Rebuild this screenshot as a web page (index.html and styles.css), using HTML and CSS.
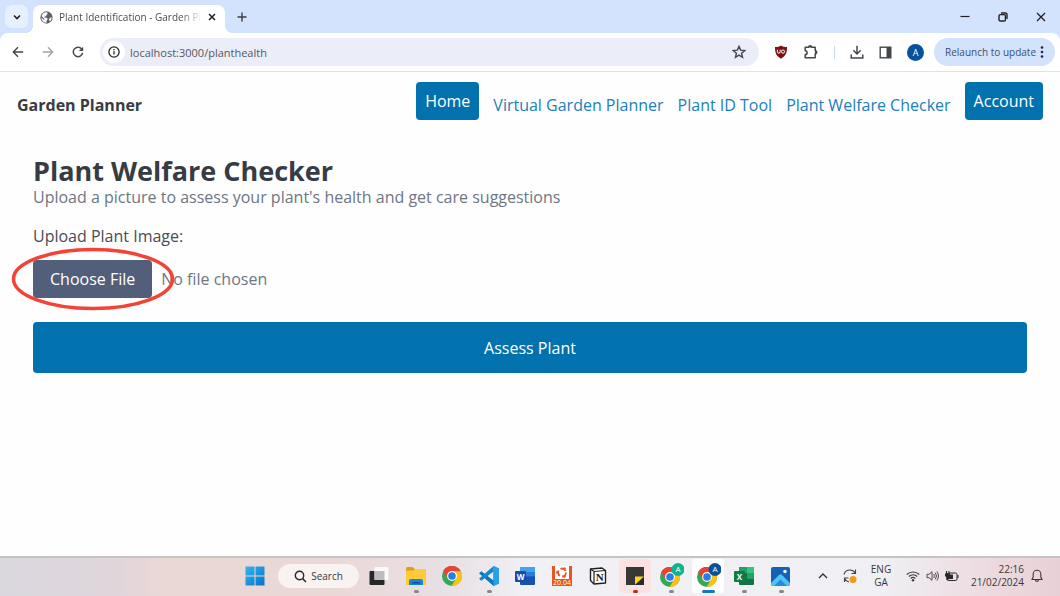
FILE: index.html
```html
<!DOCTYPE html>
<html lang="en">
<head>
<meta charset="utf-8">
<title>Plant Identification - Garden Planner</title>
<link rel="stylesheet" href="styles.css">
</head>
<body>
<header class="browser">
  <div class="tabstrip">
    <button class="tab-search" aria-label="Search tabs"><svg width="10" height="10" viewBox="0 0 10 10"><path d="M2 3.5 5 6.5 8 3.5" fill="none" stroke="#1f2328" stroke-width="1.6"/></svg></button>
    <div class="tab">
      <svg width="13" height="13" viewBox="0 0 14 14"><circle cx="7" cy="7" r="6.6" fill="#5c6065"/><path d="M7.600 1.400 8.200 3.200 6.800 4.200 6.600 5.600 4.800 6 5 7.200H7.200L8.400 8.600 7.200 10 7 12.600A5.600 5.600 0 0 1 1.400 7L4.400 9.800 5 9 3.600 7.400 1.700 5.600A5.600 5.600 0 0 1 7.600 1.400zM10.800 7.200 12.600 6.800A5.600 5.600 0 0 1 10.400 11.400L9.600 9z" fill="#fff"/></svg>
      <span class="tab-title">Plant Identification - Garden Planner</span>
      <button class="plain" aria-label="Close tab"><svg width="8" height="8" viewBox="0 0 8 8"><path d="M1 1l6 6M7 1 1 7" stroke="#202124" stroke-width="1.5"/></svg></button>
    </div>
    <button class="plain new-tab" aria-label="New tab"><svg width="10" height="10" viewBox="0 0 10 10"><path d="M5 .5v9M.5 5h9" stroke="#3c4043" stroke-width="1.4"/></svg></button>
    <div class="window-controls">
      <button class="plain" aria-label="Minimize"><svg width="10" height="10" viewBox="0 0 10 10"><path d="M.5 4.500h9" stroke="#202124" stroke-width="1.2"/></svg></button>
      <button class="plain" aria-label="Restore"><svg width="10" height="10" viewBox="0 0 10 10" fill="none" stroke="#202124" stroke-width="1.4"><rect x="1" y="2.6" width="6.4" height="6.4" rx="1.3"/><path d="M3 1h4.2A1.8 1.8 0 0 1 9 2.8V7"/></svg></button>
      <button class="plain" aria-label="Close"><svg width="10" height="10" viewBox="0 0 10 10"><path d="M1 1l8 8M9 1 1 9" stroke="#202124" stroke-width="1.3"/></svg></button>
    </div>
  </div>
  <div class="toolbar">
    <div class="nav-buttons">
      <button class="plain" aria-label="Back"><svg width="12" height="12" viewBox="0 0 12 12"><path d="M11.2 6H1.5M6 1.3 1.3 6 6 10.7" fill="none" stroke="#43474b" stroke-width="1.4"/></svg></button>
      <button class="plain" aria-label="Forward"><svg width="12" height="12" viewBox="0 0 12 12"><path d="M.8 6h9.7M6 1.3 10.7 6 6 10.7" fill="none" stroke="#a2a4a7" stroke-width="1.4"/></svg></button>
      <button class="plain" aria-label="Reload"><svg width="12" height="12" viewBox="0 0 12 12"><path d="M10.6 6.8A4.7 4.7 0 1 1 9.5 2.8L10.4 4" fill="none" stroke="#43474b" stroke-width="1.5"/><path d="M11.2.8v4.3H6.9z" fill="#43474b"/></svg></button>
    </div>
    <div class="omnibox">
      <button class="site-info" aria-label="Site information"><svg width="12" height="12" viewBox="0 0 12 12"><circle cx="6" cy="6" r="5.1" fill="none" stroke="#202124" stroke-width="1.3"/><path d="M6 5.2v3.4M6 3v1.3" stroke="#202124" stroke-width="1.3"/></svg></button>
      <input class="url" type="text" value="localhost:3000/planthealth" aria-label="Address">
      <button class="plain" aria-label="Bookmark"><svg width="14" height="14" viewBox="0 0 14 14"><path d="M7 1.3 8.6 5.1 12.8 5.5 9.6 8.2 10.5 12.3 7 10.1 3.5 12.3 4.4 8.2 1.2 5.5 5.4 5.1z" fill="none" stroke="#43474b" stroke-width="1.4"/></svg></button>
    </div>
    <div class="extensions">
      <button class="plain" aria-label="Blocker"><svg width="14" height="14" viewBox="0 0 14 14"><path d="M7 .4C8.6 1.7 10.6 2.1 13 2.1 13 8 11.8 11 7 13.7 2.2 11 1 8 1 2.1 3.400 2.100 5.400 1.700 7 .4z" fill="#800f14"/><path d="M3.400 4.700v2.100a1.400 1.400 0 0 0 2.800 0V4.700" fill="none" stroke="#fff" stroke-width="1"/><circle cx="9" cy="6.600" r="1.600" fill="none" stroke="#fff"/></svg></button>
      <button class="plain" aria-label="Extensions"><svg width="16" height="16" viewBox="0 0 16 16"><path d="M2.200 3.300H5.700A1.500 1.500 0 0 1 8.700 3.300H12.200V6.800A1.500 1.500 0 0 1 12.200 9.800V13.800H2.200V10.600A1.900 1.900 0 0 0 2.200 6.800z" fill="none" stroke="#43474b" stroke-width="1.500" stroke-linejoin="round"/><path d="M5.600 3.600a1.600 1.600 0 0 1 3.200 0zM12 6.700a1.600 1.600 0 0 1 0 3.200z" fill="#43474b"/></svg></button>
      <span class="divider"></span>
      <button class="plain" aria-label="Downloads"><svg width="14" height="14" viewBox="0 0 14 14"><path d="M7 .8v8M3.300 5.300 7 9l3.700-3.700M1.200 9.500V13h11.600V9.500" fill="none" stroke="#43474b" stroke-width="1.500"/></svg></button>
      <button class="plain" aria-label="Side panel"><svg width="13" height="13" viewBox="0 0 13 13"><rect x="1.200" y="1.200" width="10.600" height="10.600" fill="none" stroke="#43474b" stroke-width="1.400"/><path d="M7.500 1h4.500v11H7.500z" fill="#43474b"/></svg></button>
      <button class="avatar">A</button>
    </div>
    <button class="relaunch">Relaunch to update<svg width="4" height="14" viewBox="0 0 4 14" fill="#1d2b4a"><circle cx="2" cy="2.500" r="1.300"/><circle cx="2" cy="7" r="1.300"/><circle cx="2" cy="11.500" r="1.300"/></svg></button>
  </div>
</header>

<div class="page">
  <nav class="site-nav">
    <strong class="brand">Garden Planner</strong>
    <div class="links">
      <a class="pill" href="#">Home</a>
      <a class="link" href="#">Virtual Garden Planner</a>
      <a class="link" href="#">Plant ID Tool</a>
      <a class="link" href="#">Plant Welfare Checker</a>
      <a class="pill" href="#">Account</a>
    </div>
  </nav>
  <main class="content">
    <h1>Plant Welfare Checker</h1>
    <p class="subtitle">Upload a picture to assess your plant's health and get care suggestions</p>
    <form>
      <label for="plant-image">Upload Plant Image:</label>
      <div class="file-row">
        <input id="plant-image" class="file" type="file">
        <svg class="highlight" width="164" height="64" viewBox="0 0 164 64"><ellipse cx="82" cy="32" rx="79.500" ry="29.500" fill="none" stroke="#f44336" stroke-width="3.500"/></svg>
      </div>
      <button class="assess" type="button">Assess Plant</button>
    </form>
  </main>
</div>

<footer class="taskbar">
  <button class="plain start" aria-label="Start"><svg width="20" height="20" viewBox="0 0 20 20"><defs><linearGradient id="win" x2="1" y2="1"><stop stop-color="#35b5ec"/><stop offset="1" stop-color="#0870cc"/></linearGradient></defs><path d="M.5.5h9v9h-9zM10.500.5h9v9h-9zM.5 10.500h9v9h-9zM10.500 10.500h9v9h-9z" fill="url(#win)"/></svg></button>
  <button class="search"><svg width="13" height="13" viewBox="0 0 13 13"><circle cx="5.500" cy="5.500" r="4.200" fill="none" stroke="#28282a" stroke-width="1.400"/><path d="M8.600 8.600 12 12" stroke="#28282a" stroke-width="1.500"/></svg>Search</button>
  <div class="apps">
    <button class="app" aria-label="Task view"><svg width="20" height="20" viewBox="0 0 20 20"><rect x=".5" y="5" width="15" height="14" rx="1" fill="#262729"/><rect x="5.500" y="1" width="14" height="13" rx="1" fill="#fafafa"/><path d="M5.500 5h10v9h-10z" fill="#bdbdbd"/></svg></button>
    <button class="app running" aria-label="File Explorer"><svg width="20" height="20" viewBox="0 0 20 20"><path d="M0 2.500Q0 1 1.500 1h5L9 3.500V8H0z" fill="#e29c17"/><path d="M0 6 1 4.500h7L9.500 3H19q1 0 1 1v14q0 1-1 1H1q-1 0-1-1z" fill="#ffc937"/><path d="M3 19v-4q0-2 2-2h10q2 0 2 2v4z" fill="#1683d8"/><path d="M6 16h8v1.500H6z" fill="#07529a"/></svg></button>
    <button class="app" aria-label="Chrome"><svg width="20" height="20" viewBox="0 0 20 20"><g id="chrome"><circle cx="10" cy="10" r="10" fill="#34a853"/><path d="M10 10 1.340 5A10 10 0 0 1 18.660 5L18.660 5.500H10z" fill="#ea4335"/><path d="M10 5.200h8.760A10 10 0 0 1 9.500 20L14.200 12.300z" fill="#fbc116"/><path d="M1.340 5A10 10 0 0 1 10 0v5.200L5.600 12.300z" fill="#ea4335"/><circle cx="10" cy="10" r="4.900" fill="#fff"/><circle cx="10" cy="10" r="3.800" fill="#287de9"/></g></svg></button>
    <button class="app running" aria-label="Visual Studio Code"><svg width="20" height="20" viewBox="0 0 20 20"><path d="M14.500 0 20 2.500v15L14.500 20 0 7.200 2.300 5.200 14.500 14.500z" fill="#0878bd"/><path d="M14.500 0v5.500L2.300 14.800 0 12.800z" fill="#1588cc"/><path d="M14.500 0 20 2.500v15L14.500 20z" fill="#26a0e8"/></svg></button>
    <button class="app" aria-label="Word"><svg width="20" height="20" viewBox="0 0 20 20"><rect x="5" y="1" width="15" height="18" rx="1" fill="#1751ad"/><path d="M5 1h15v5H5z" fill="#41a5ee"/><path d="M5 6h15v4.500H5z" fill="#2b7cd3"/><rect y="5" width="11" height="11" rx="1" fill="#124fa8"/><text x="5.500" y="13.500" class="glyph">W</text></svg></button>
    <button class="app" aria-label="Ubuntu 20.04"><svg width="20" height="20" viewBox="0 0 20 20"><path d="M0 0h20v20H0z" fill="#e95420"/><path d="M3 0h14v13H3z" fill="#fff"/><circle cx="10" cy="6.500" r="4" fill="none" stroke="#e95420" stroke-width="1.800" stroke-dasharray="6 2.370"/><g fill="#e95420"><circle cx="5.200" cy="6.500" r="1.200"/><circle cx="12.500" cy="2.500" r="1.200"/><circle cx="12.500" cy="10.500" r="1.200"/></g><text x="10" y="19" class="version">20.04</text></svg></button>
    <button class="app" aria-label="Notion"><svg width="18" height="18" viewBox="0 0 18 18"><path d="M1.500 2 13 1l3.500 2.500v12.500L5 17 1.500 13.500z" fill="#fff" stroke="#202020" stroke-width="1.400" stroke-linejoin="round"/><path d="M1.500 2 5 4.500 16.500 3.500M5 4.500V17" fill="none" stroke="#202020" stroke-width="1.200"/><text x="10.800" y="14" class="notion-letter">N</text></svg></button>
    <button class="app running alert" aria-label="Sticky Notes"><svg width="18" height="18" viewBox="0 0 18 18"><path d="M0 0h18v9.500L9.500 18H0z" fill="#373737"/><path d="M9 9.500h9L9 18z" fill="#ffd413"/><path d="M18 9.500V18H9z" fill="#292929"/></svg></button>
    <button class="app running" aria-label="Chrome, profile A"><svg width="26" height="26" viewBox="0 0 26 26"><use href="#chrome" x="2" y="4"/><circle cx="20" cy="6.500" r="6.500" fill="#12b38f"/><text x="20" y="9.300" class="profile">A</text></svg></button>
    <button class="app running active" aria-label="Chrome, current"><svg width="26" height="26" viewBox="0 0 26 26"><use href="#chrome" x="2" y="4"/><circle cx="20" cy="6.500" r="6.500" fill="#07529b"/><text x="20" y="9.300" class="profile">A</text></svg></button>
    <button class="app running" aria-label="Excel"><svg width="20" height="20" viewBox="0 0 20 20"><rect x="5" y="1" width="15" height="18" rx="1" fill="#147346"/><path d="M5 1h8v6H5z" fill="#21a366"/><path d="M13 1h7v6h-7z" fill="#33c481"/><path d="M13 7h7v6h-7z" fill="#21a366"/><rect y="5" width="11" height="11" rx="1" fill="#107c41"/><text x="5.500" y="13.500" class="glyph">X</text></svg></button>
    <button class="app running" aria-label="Photos"><svg width="19" height="19" viewBox="0 0 19 19"><rect width="19" height="19" rx="2" fill="#1460b4"/><path d="M0 16 8 8q1.500-1.500 3 0l8 8v1q0 2-2 2H2q-2 0-2-2z" fill="#51c3f2"/><path d="M3 19 9.500 12.500 16 19z" fill="#248bdb"/><circle cx="14" cy="4.500" r="1.800" fill="#e6f5ff"/></svg></button>
  </div>
  <div class="tray">
    <button class="plain" aria-label="Hidden icons"><svg width="10" height="10" viewBox="0 0 10 10"><path d="M1 7 5 3l4 4" fill="none" stroke="#303034" stroke-width="1.300"/></svg></button>
    <button class="plain update" aria-label="Update"><svg width="16" height="16" viewBox="0 0 16 16"><path d="M2 6.500A6 6 0 0 1 13 5M13.500 1.500V5.500H9.500M2.500 14V10H6.500M2.500 10.500A6 6 0 0 0 7 14" fill="none" stroke="#454549" stroke-width="1.100"/><circle cx="11" cy="11.500" r="3.500" fill="#f39c12"/></svg></button>
    <div class="language">ENG<br>GA</div>
    <button class="plain quick" aria-label="Network, volume and battery">
      <svg width="14" height="12" viewBox="0 0 14 12"><g fill="none" stroke="#3a3a3e" stroke-width="1.100"><path d="M.8 4.500a8.800 8.800 0 0 1 12.400 0M2.800 6.500a6 6 0 0 1 8.400 0M4.700 8.500a3.300 3.300 0 0 1 4.600 0"/></g><circle cx="7" cy="10.200" r="1.200" fill="#3a3a3e"/></svg>
      <svg width="13" height="12" viewBox="0 0 13 12"><path d="M1 4.300h2L6 1.700v8.600L3 7.700H1zM7.700 4q1.500 2 0 4M9.300 2.700q2.400 3.300 0 6.600M10.900 1.500q3.200 4.500 0 9" fill="none" stroke="#4a4a4e"/></svg>
      <svg width="14" height="12" viewBox="0 0 14 12"><rect x="2" y="3" width="10" height="7.500" rx="1.500" fill="none" stroke="#28282c"/><path d="M3.500 4.500H8V9H3.500zM12.500 5h1v3h-1zM0 3.500h5V6L3.500 7.500V10h-2V7.500L0 6zM1 1h1v3H1zM3.500 1h1v3h-1z" fill="#28282c"/></svg>
    </button>
    <div class="clock">22:16<br>21/02/2024</div>
    <button class="plain" aria-label="Notifications"><svg width="12" height="14" viewBox="0 0 12 14"><path d="M1 10.500 2.200 8V5a3.800 3.800 0 0 1 7.600 0v3L11 10.500zM4.400 10.800a1.600 1.600 0 0 0 3.200 0" fill="none" stroke="#3a3a3e" stroke-width="1.100"/></svg></button>
  </div>
</footer>
</body>
</html>
```
FILE: styles.css
```css
* { box-sizing: border-box; }

body {
  margin: 0;
  min-height: 100vh;
  display: flex;
  flex-direction: column;
  font-family: "Open Sans", "Noto Sans", sans-serif;
  color: #373c44;
  background: #fefefe;
}

button, input { font: inherit; color: inherit; }
svg { display: block; flex: none; }

.plain {
  display: flex;
  align-items: center;
  padding: 0;
  border: 0;
  background: none;
}

/* Browser window */
.browser { background: #d3e2fd; }

.tabstrip {
  display: flex;
  align-items: center;
  height: 33px;
  padding: 0 14px 0 5px;
}

.tab-search {
  display: grid;
  place-items: center;
  width: 23px;
  height: 23px;
  padding: 0;
  border: 0;
  border-radius: 7px;
  background: #e9f0fd;
}

.tab {
  position: relative;
  align-self: flex-end;
  display: flex;
  align-items: center;
  gap: 6px;
  width: 192px;
  height: 28px;
  margin-left: 5px;
  padding: 0 9px 4px 7px;
  border-radius: 8px 8px 0 0;
  background: #fff;
}

.tab::before, .tab::after {
  content: "";
  position: absolute;
  bottom: 0;
  width: 8px;
  height: 8px;
}
.tab::before { left: -8px; background: radial-gradient(circle at 0 0, transparent 8px, #fff 8px); }
.tab::after { right: -8px; background: radial-gradient(circle at 100% 0, transparent 8px, #fff 8px); }

.tab-title {
  flex: 1;
  overflow: hidden;
  white-space: nowrap;
  font-size: 10px;
  color: #4a4d50;
  mask-image: linear-gradient(to right, #000 85%, transparent);
}

.new-tab { margin-left: 12px; }
.window-controls { display: flex; gap: 28px; margin-left: auto; }

.toolbar {
  display: flex;
  align-items: center;
  height: 39px;
  padding: 0 5px 0 12px;
  border-bottom: 1px solid #e0e1e3;
  border-radius: 8px 8px 0 0;
  background: #fff;
}

.nav-buttons { display: flex; gap: 18px; }

.omnibox {
  flex: 1;
  display: flex;
  align-items: center;
  height: 28px;
  margin-left: 16px;
  padding: 0 13px 0 3px;
  border-radius: 14px;
  background: #ebeef8;
}

.site-info {
  display: grid;
  place-items: center;
  width: 22px;
  height: 22px;
  padding: 0;
  border: 0;
  border-radius: 50%;
  background: #fff;
}

.url {
  flex: 1;
  min-width: 0;
  padding: 0 5px;
  border: 0;
  background: none;
  font-size: 11px;
  color: #55585d;
}

.extensions { display: flex; align-items: center; gap: 15px; margin: 0 10px 0 15px; }
.divider { width: 1px; height: 13px; background: #c4dbf8; }

.avatar {
  width: 17px;
  height: 17px;
  padding: 0;
  border: 0;
  border-radius: 50%;
  background: #07529b;
  color: #fff;
  font-size: 9px;
  line-height: 17px;
}

.relaunch {
  display: flex;
  align-items: center;
  gap: 4px;
  height: 28px;
  padding: 0 11px;
  border: 0;
  border-radius: 14px;
  background: #d3e2fd;
  color: #3f506c;
  font-size: 10px;
}

/* Site */
.page { flex: 1; font-size: 16px; }

.site-nav {
  display: flex;
  align-items: center;
  justify-content: space-between;
  padding: 10px 17px 0;
}

.brand { padding-top: 8px; color: #373c44; }
.links { display: flex; gap: 14px; }
.links a { color: #1a7fbc; text-decoration: none; line-height: 22px; }
.links .link { padding-top: 12px; }
.links .pill { padding: 8px 9px; border-radius: 4px; background: #0172ad; color: #fff; }

.content { padding: 34px 33px; }

h1 {
  margin: 0;
  font-size: 27px;
  line-height: 33px;
  color: #373c44;
}

.subtitle {
  margin: 0 0 16px;
  line-height: 21px;
  color: #6d7684;
}

label { display: block; line-height: 24px; color: #484c54; }

.file-row {
  position: relative;
  margin: 12px 0 24px;
}

.file {
  display: block;
  width: 100%;
  height: 38px;
  color: #6d7684;
}

.file::file-selector-button {
  height: 38px;
  margin: 0 9px 0 0;
  padding: 0 17px;
  border: 0;
  border-radius: 4px;
  background: #525f7a;
  color: #fff;
  font: inherit;
}

.highlight { position: absolute; left: -22px; top: -13px; pointer-events: none; }

.assess {
  display: block;
  width: 100%;
  height: 51px;
  border: 0;
  border-radius: 4px;
  background: #0172ad;
  color: #fff;
}

/* Desktop taskbar */
.taskbar {
  display: flex;
  align-items: center;
  justify-content: flex-end;
  height: 40px;
  padding: 0 17px 2px 0;
  border-top: 2px solid #c6c3c5;
  background: linear-gradient(to right, #dad7de 0%, #dfd6db 11%, #ead8d5 15%, #ead8d7 32%, #e7e0e4 42%, #f1f1f5 50%, #f0f0f4 83%, #ecd9de 94%, #e8d1d6 100%);
}

.search {
  display: flex;
  align-items: center;
  justify-content: center;
  gap: 4px;
  width: 81px;
  height: 24px;
  margin: 0 2px 0 13px;
  padding: 0;
  border: 0;
  border-radius: 12px;
  background: #f8f2f1;
  color: #38383a;
  font-size: 10px;
}

.apps { display: grid; grid-template-columns: repeat(12, 1fr); width: 438px; }

.app {
  position: relative;
  display: grid;
  place-items: center;
  height: 34px;
  padding: 0;
  border: 0;
  background: none;
}

.running::after {
  content: "";
  position: absolute;
  bottom: 0;
  left: 50%;
  width: 5px;
  height: 3px;
  margin-left: -2px;
  border-radius: 2px;
  background: #8b8688;
}

.alert::before, .active::before {
  content: "";
  position: absolute;
  inset: 0 2px;
  border-radius: 4px;
  background: #fbe3e4;
}
.active::before { background: #fff; }
.app svg { position: relative; }
.alert::after { background: #c42b1c; }
.active::after { width: 13px; margin-left: -6px; background: #1976c5; }

.glyph, .version, .notion-letter, .profile { text-anchor: middle; fill: #fff; font-size: 8px; }
.glyph { font-weight: 700; }
.version { font-size: 7px; }
.notion-letter { font: 700 11px "Liberation Serif", serif; fill: #202020; }

.tray {
  display: flex;
  align-items: center;
  margin-left: 19px;
  font-size: 10px;
  line-height: 13px;
  color: #38383c;
}

.update { margin-left: 14px; }
.language { width: 42px; margin-left: 2px; text-align: center; }
.quick { gap: 6px; margin-left: 4px; }
.clock { width: 60px; margin: 0 7px 0 5px; text-align: right; }
```
